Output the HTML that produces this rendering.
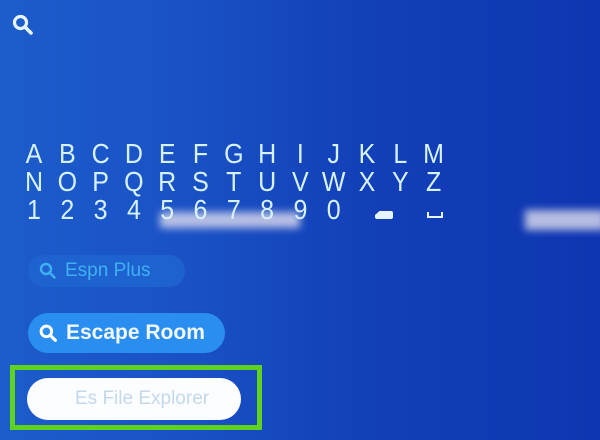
<!DOCTYPE html>
<html><head><style>
*{margin:0;padding:0;box-sizing:border-box}
body{width:600px;height:440px;overflow:hidden;position:relative;font-family:"Liberation Sans",sans-serif;
background:linear-gradient(90deg,#1c5ccb 0%,#1a52c6 30%,#1240b8 60%,#0f36b2 100%);}
.k{position:absolute;width:30px;text-align:center;color:#d6f2ff;font-size:25px;line-height:28px;font-weight:400;transform:scaleY(1.12)}
.streak{position:absolute;filter:blur(4px);background:#d4d4ea;opacity:.85}
.pill{position:absolute;border-radius:20px;display:flex;align-items:center;font-weight:bold}
</style></head><body>
<svg style="position:absolute;left:12px;top:14px" width="22" height="22" viewBox="0 0 22 22"><circle cx="8.5" cy="8.5" r="6" fill="none" stroke="#e6f4ff" stroke-width="3.2"/><line x1="13" y1="13" x2="19" y2="19" stroke="#e6f4ff" stroke-width="3.6" stroke-linecap="round"/></svg>
<div class="streak" style="left:160px;top:212px;width:140px;height:16px"></div>
<div class="streak" style="left:525px;top:210px;width:80px;height:20px"></div>
<div id="kb"></div>
<div class="pill" style="left:28px;top:255px;width:157px;height:32px;background:#1e62d0;color:#3fb0f2;font-size:19px;font-weight:normal">
<svg style="margin:0 8px 0 11px" width="18" height="18" viewBox="0 0 18 18"><circle cx="7" cy="7" r="5" fill="none" stroke="#3fb0f2" stroke-width="2.4"/><line x1="10.5" y1="10.5" x2="15.5" y2="15.5" stroke="#3fb0f2" stroke-width="2.6" stroke-linecap="round"/></svg>Espn Plus</div>
<div class="pill" style="left:28px;top:313px;width:197px;height:40px;background:#2a8ef0;color:#f2f8ff;font-size:21px">
<svg style="margin:0 8px 0 11px" width="19" height="19" viewBox="0 0 18 18"><circle cx="7" cy="7" r="5" fill="none" stroke="#fff" stroke-width="2.8"/><line x1="10.5" y1="10.5" x2="15.5" y2="15.5" stroke="#fff" stroke-width="3" stroke-linecap="round"/></svg>Escape Room</div>
<div style="position:absolute;left:10px;top:365px;width:252px;height:65px;border:5px solid #5ed21c"></div>
<div class="pill" style="left:27px;top:378px;width:214px;height:42px;border-radius:21px;background:#fbfdff;color:#c4d8ec;font-size:19px;font-weight:normal;padding-left:48px">Es File Explorer</div>
<script>
var r=["ABCDEFGHIJKLM","NOPQRSTUVWXYZ","1234567890"];var h="";
var tops=[140,168,196];
r.forEach(function(s,i){for(var j=0;j<s.length;j++){h+='<div class="k" style="left:'+(19+j*33.3)+'px;top:'+tops[i]+'px">'+s[j]+'</div>';}});
document.getElementById('kb').innerHTML=h+
'<div style="position:absolute;left:375px;top:211px;width:18px;height:8px;background:#e6f4ff;border-radius:2px;clip-path:polygon(25% 0,100% 0,100% 100%,0 100%,0 50%)"></div>'+
'<div style="position:absolute;left:427px;top:212px;width:16px;height:6px;border:2.5px solid #e6f4ff;border-top:none"></div>';
</script>
</body></html>
